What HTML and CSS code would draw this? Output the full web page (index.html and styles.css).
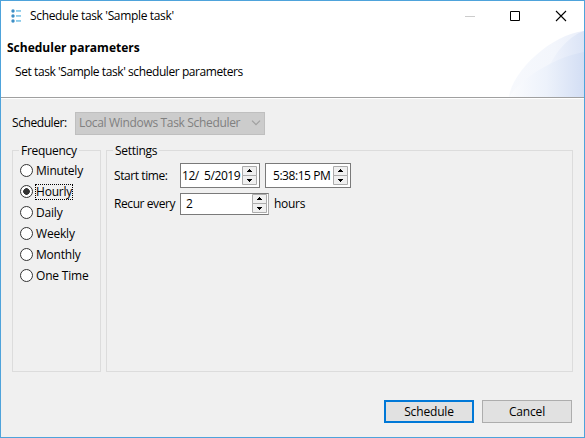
FILE: index.html
```html
<!DOCTYPE html>
<html lang="en">
<head>
<meta charset="utf-8">
<title>Schedule task</title>
<link rel="stylesheet" href="styles.css">
</head>
<body>
<div class="window">
  <header class="banner">
    <svg class="arc" width="75" height="66" viewBox="0 0 75 66">
      <defs>
        <linearGradient id="outer" x1="0" x2="1"><stop offset="0" stop-color="#f7f9fd"/><stop offset=".6" stop-color="#f3f6fc"/><stop offset="1" stop-color="#e9eefa"/></linearGradient>
        <linearGradient id="upper" x1="0" x2="1"><stop offset="0" stop-color="#f2f5fc"/><stop offset="1" stop-color="#dbe4f6"/></linearGradient>
        <linearGradient id="lower" x1="0" x2="1"><stop offset="0" stop-color="#fbfcfe"/><stop offset=".5" stop-color="#edf2fb"/><stop offset="1" stop-color="#d3def4"/></linearGradient>
      </defs>
      <path d="M0 66C3 40 43 3 75 0V66Z" fill="url(#outer)"/>
      <path d="M38 40C46 20 62 4 75 0V40Z" fill="url(#upper)"/>
      <path d="M0 66C10 49 45 26 75 21V66Z" fill="url(#lower)"/>
    </svg>
    <div class="titlebar">
      <svg class="app-icon" width="12" height="14" viewBox="0 0 12 14">
        <g fill="#3d8fc6"><circle cx="2" cy="2" r="1.7"/><circle cx="2" cy="7" r="1.7"/><circle cx="2" cy="12" r="1.7"/></g>
        <path d="M5 1.5h5M5 6.5h5M5 11.5h5" stroke="#8ccbea"/>
        <path d="M5 2.5h5M5 7.5h5M5 12.5h5" stroke="#9dd3ee"/>
      </svg>
      <span class="title">Schedule task 'Sample task'</span>
      <svg class="controls" width="102" height="12" viewBox="0 0 102 12" fill="none">
        <path d="M0 6.5h10" stroke="#ccc"/>
        <path d="M45.5 1.5h9v9h-9z" stroke="#000"/>
        <path d="M91 1l10 10M101 1L91 11" stroke="#000" stroke-width="1.1"/>
      </svg>
    </div>
    <h1 class="heading">Scheduler parameters</h1>
    <p class="description">Set task 'Sample task' scheduler parameters</p>
  </header>
  <main class="content">
    <div class="scheduler">
      <span class="scheduler-label">Scheduler:</span>
      <div class="combo"><span class="combo-text">Local Windows Task Scheduler</span>
        <svg width="10" height="6" viewBox="0 0 10 6"><path d="M1 .7l4 4 4-4" fill="none" stroke="#a0a0a0" stroke-width="1.2"/></svg>
      </div>
    </div>
    <div class="groups">
      <section class="group frequency">
        <span class="legend">Frequency</span>
        <div class="option"><i class="radio"></i><span>Minutely</span></div>
        <div class="option"><i class="radio checked"></i><span class="focus">Hourly</span></div>
        <div class="option"><i class="radio"></i><span>Daily</span></div>
        <div class="option"><i class="radio"></i><span>Weekly</span></div>
        <div class="option"><i class="radio"></i><span>Monthly</span></div>
        <div class="option"><i class="radio"></i><span>One Time</span></div>
      </section>
      <section class="group settings">
        <span class="legend">Settings</span>
        <div class="row">
          <span class="row-label">Start time:</span>
          <div class="field date"><span>12/&nbsp; 5/2019</span>
            <svg class="spin" width="15" height="19" viewBox="0 0 15 19"><path d="M.5.5h14v9H.5zM.5 9.5h14v9H.5z" fill="#f0f0f0" stroke="#acacac"/><path d="M5 6h5V5H9V4H8V3H7v1H6v1H5zM5 13h5v1H9v1H8v1H7v-1H6v-1H5z"/></svg>
          </div>
          <div class="field time"><span>5:38:15 PM</span>
            <svg class="spin" width="15" height="19" viewBox="0 0 15 19"><path d="M.5.5h14v9H.5zM.5 9.5h14v9H.5z" fill="#f0f0f0" stroke="#acacac"/><path d="M5 6h5V5H9V4H8V3H7v1H6v1H5zM5 13h5v1H9v1H8v1H7v-1H6v-1H5z"/></svg>
          </div>
        </div>
        <div class="row recur">
          <span class="row-label">Recur every</span>
          <div class="field count"><span>2</span>
            <svg class="spin" width="15" height="19" viewBox="0 0 15 19"><path d="M.5.5h14v9H.5zM.5 9.5h14v9H.5z" fill="#f0f0f0" stroke="#acacac"/><path d="M5 6h5V5H9V4H8V3H7v1H6v1H5zM5 13h5v1H9v1H8v1H7v-1H6v-1H5z"/></svg>
          </div>
          <span class="unit">hours</span>
        </div>
      </section>
    </div>
  </main>
  <footer class="actions">
    <button class="button primary">Schedule</button>
    <button class="button">Cancel</button>
  </footer>
</div>
</body>
</html>
```
FILE: styles.css
```css
* { box-sizing: border-box; }
body { margin: 0; font: 12px/16px "Open Sans", "Noto Sans", sans-serif; color: #000; letter-spacing: -.15px; }
.window { width: 585px; height: 438px; border: 1px solid #4ea3db; background: #f0f0f0; display: flex; flex-direction: column; white-space: nowrap; overflow: hidden; }
.banner { position: relative; height: 98px; flex: none; background: #fff; border-bottom: 1px solid #fff; box-shadow: inset 0 -1px #a0a0a0; }
.arc { position: absolute; right: 0; top: 30px; }
.titlebar { height: 29px; display: flex; align-items: center; padding: 0 17px 0 10px; }
.app-icon { margin-right: 7px; }
.title { letter-spacing: -.34px; }
.controls { margin-left: auto; }
.heading { margin: 10px 0 0 6px; font-size: 12px; line-height: 16px; font-weight: 700; letter-spacing: 0; }
.description { margin: 8px 0 0 14px; letter-spacing: -.42px; }
.content { padding: 12px 11px 0; }
.scheduler { display: flex; height: 24px; align-items: center; }
.scheduler-label { width: 63px; letter-spacing: -.42px; }
.combo { width: 190px; height: 23px; border: 1px solid #bfbfbf; background: #ccc; color: #808080; display: flex; align-items: center; justify-content: space-between; padding: 0 3px; }
.combo-text { letter-spacing: -.33px; }
.groups { display: flex; gap: 5px; margin-top: 15px; }
.group { height: 222px; border: 1px solid #dcdcdc; }
.frequency { width: 89px; padding-left: 7px; }
.settings { width: 467px; padding-left: 7px; }
.legend { display: block; width: max-content; height: 16px; margin-top: -8px; margin-left: -1px; background: #f0f0f0; padding: 0 2px; letter-spacing: -.3px; }
.frequency .legend { margin-bottom: 1px; }
.option { height: 21px; display: flex; align-items: center; letter-spacing: -.2px; }
.radio { width: 13px; height: 13px; border: 1px solid #333; border-radius: 50%; background: #fff; margin-right: 3px; }
.checked { background: radial-gradient(circle, #333 3px, #fff 3.6px); }
.focus { outline: 1px dotted #000; outline-offset: 0; line-height: 14px; }
.row { display: flex; align-items: center; height: 25px; margin-top: 4px; }
.row-label { width: 66px; letter-spacing: -.42px; }
.field { height: 25px; border: 1px solid #7a7a7a; background: #fff; display: flex; align-items: center; justify-content: space-between; letter-spacing: -.45px; }
.spin { flex: none; }
.date { width: 80px; padding: 0 2px 0 1px; }
.time { width: 86px; padding: 0 2px 0 7px; margin-left: 5px; }
.recur { height: 23px; margin-top: 4px; }
.count { width: 89px; height: 22px; padding: 0 1px 0 5px; border-right-color: #acacac; }
.unit { margin-left: 5px; letter-spacing: -.3px; }
.actions { display: flex; gap: 8px; margin: 28px 0 0 383px; }
.button { width: 90px; height: 23px; padding: 0; border: 1px solid #adadad; background: #e1e1e1; font: inherit; letter-spacing: inherit; color: #000; }
.primary { border: 2px solid #0078d7; }
```
